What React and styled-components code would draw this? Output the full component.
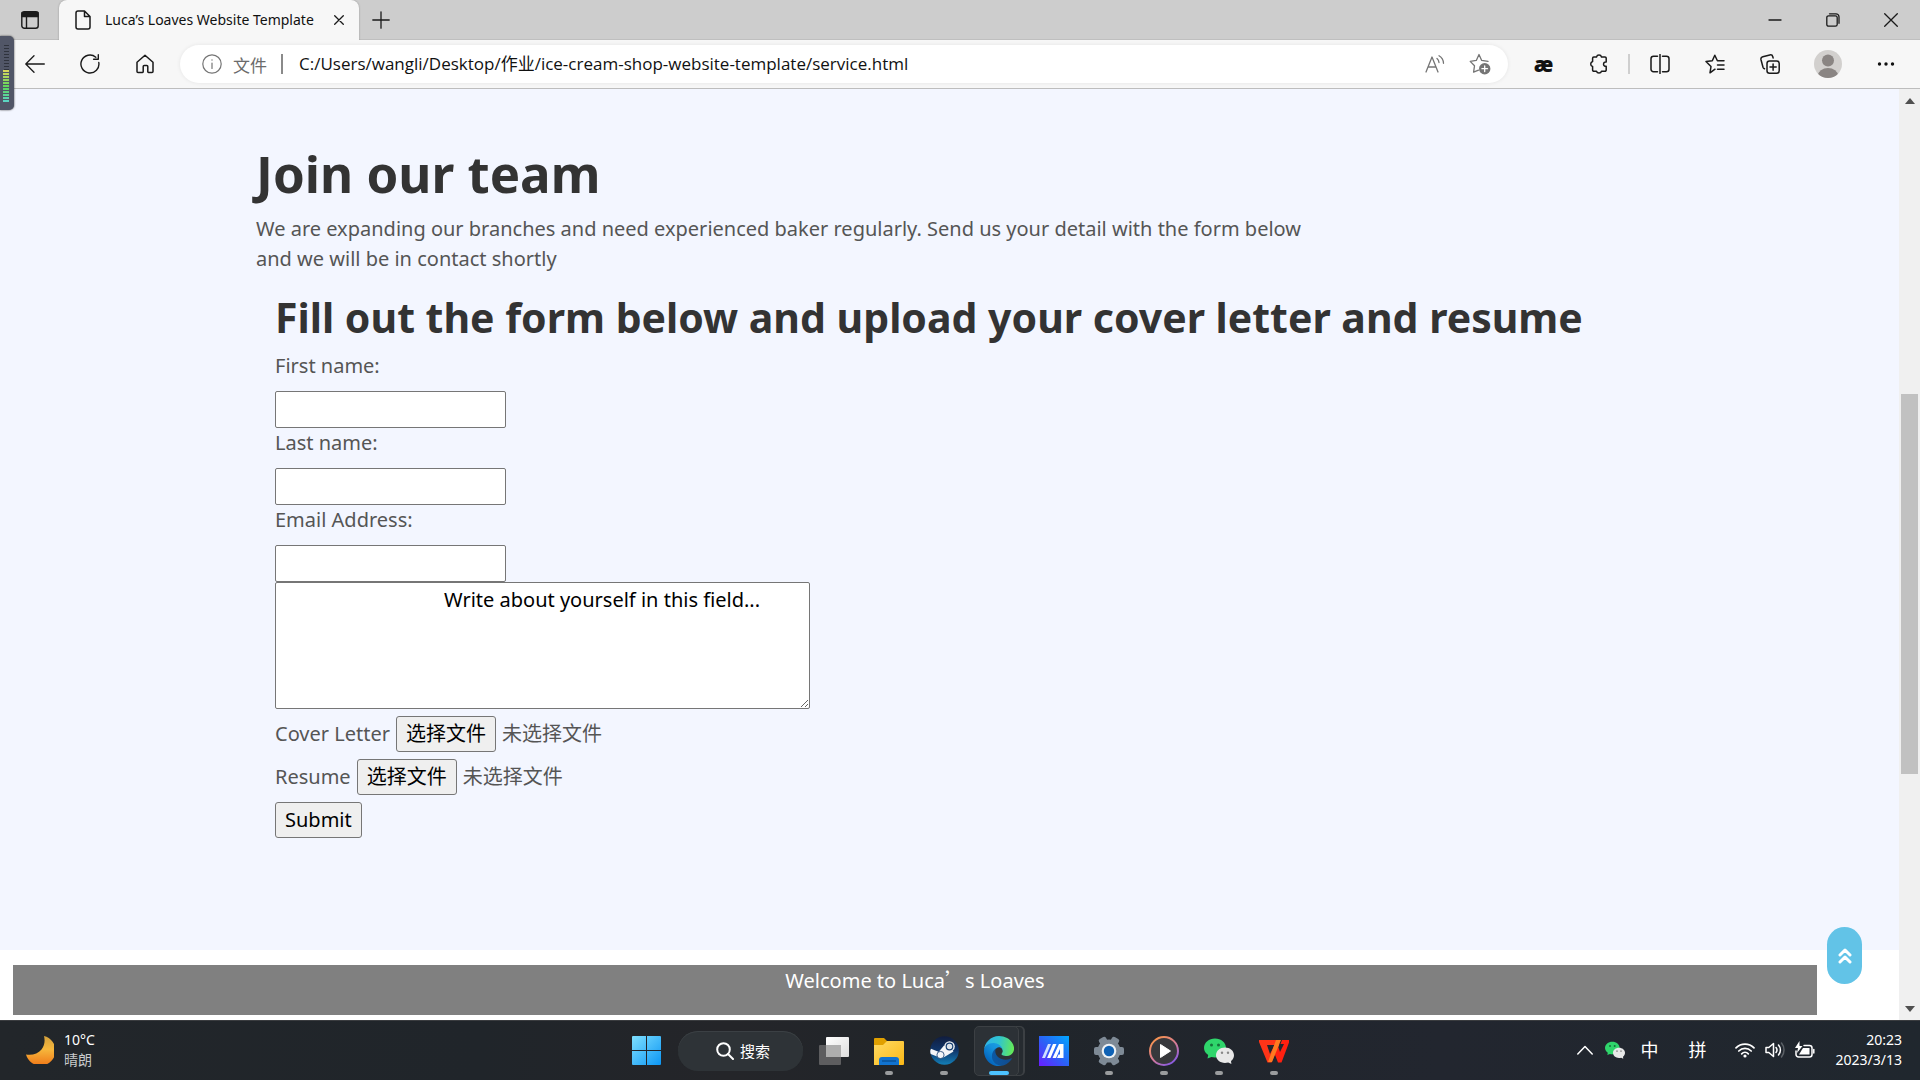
import React, { useRef, useState } from 'react';
import styled, { createGlobalStyle, css } from 'styled-components';

const GlobalStyle = createGlobalStyle`
  *, *::before, *::after { box-sizing: border-box; }
  html, body { margin: 0; height: 100%; overflow: hidden; }
  body { font-family: "Noto Sans", "Noto Sans CJK SC", sans-serif; }
  button, input, textarea { font-family: inherit; }
  h1, h2, p { margin: 0; }
  svg { display: block; flex: none; }
`;

const Desktop = styled.div`
  display: flex;
  flex-direction: column;
  height: 100vh;
  position: relative;
  background: #fff;
`;

/* ---------- browser chrome ---------- */

const TabStrip = styled.header`
  display: flex;
  align-items: stretch;
  height: 40px;
  flex: none;
  background: #cdcdcd;
  box-shadow: inset 0 -1px 0 #bfbfbf;
`;

const PlainButton = styled.button`
  display: flex;
  align-items: center;
  justify-content: center;
  padding: 0;
  border: 0;
  background: transparent;
  color: ${(p) => (p.$muted ? '#757575' : '#1a1a1a')};
  flex: none;
  width: ${(p) => p.$w || 55}px;
`;

const Tab = styled.div`
  display: flex;
  align-items: center;
  width: 300px;
  padding-left: 16px;
  border-radius: 8px 8px 0 0;
  background: #f7f7f7;
  color: #1a1a1a;
  box-shadow: 0 0 2px rgba(0, 0, 0, 0.3);
  clip-path: inset(-2px -2px 0 -2px);
`;

const TabTitle = styled.span`
  flex: 1;
  margin-left: 14px;
  font-size: 14px;
  line-height: 20px;
  white-space: nowrap;
  color: #111;
`;

const WindowButtons = styled.div`
  display: flex;
  margin-left: auto;
`;

const Toolbar = styled.nav`
  display: flex;
  align-items: center;
  height: 49px;
  flex: none;
  padding: 0 7px;
  background: #f7f7f7;
  border-bottom: 1px solid #bdbdbd;
`;

const AddressBar = styled.div`
  display: flex;
  align-items: center;
  flex: 1;
  min-width: 0;
  height: 38px;
  margin: 0 8px;
  padding: 0 6px 0 22px;
  border-radius: 19px;
  background: #fff;
  box-shadow: 0 0 4px rgba(0, 0, 0, 0.08);
  font-family: "Open Sans", "Noto Sans CJK SC", sans-serif;
  font-size: 17px;
`;

const Scheme = styled.span`
  margin-left: 11px;
  color: #6b6b6b;
  white-space: nowrap;
`;

const Rule = styled.span`
  flex: none;
  width: 2px;
  height: 20px;
  margin: ${(p) => p.$margin || '0'};
  background: ${(p) => p.$color || '#8a8a8a'};
`;

const UrlInput = styled.input`
  flex: 1;
  min-width: 0;
  padding: 0;
  border: 0;
  outline: 0;
  background: transparent;
  font-size: 17px;
  line-height: 24px;
  color: #111;
`;

const ExtensionMark = styled.span`
  font-family: "Open Sans", sans-serif;
  font-size: 21px;
  line-height: 24px;
  font-weight: 800;
  color: #111;
`;

const AudioMeter = styled.aside`
  position: absolute;
  left: 0;
  top: 36px;
  width: 14px;
  height: 74px;
  padding: 9px 0 0 3px;
  border-radius: 0 5px 5px 0;
  background: #515667;
  box-shadow: 0 0 2px #333;
`;

/* ---------- page ---------- */

const Viewport = styled.div`
  display: flex;
  flex: 1;
  min-height: 0;
`;

const Page = styled.main`
  display: flex;
  flex-direction: column;
  flex: 1;
  min-width: 0;
  position: relative;
  background: #fff;
`;

const JoinSection = styled.section`
  flex: 1;
  padding-top: 54px;
  background: #f3f6ff;
  color: #555;
  font-size: 20px;
  line-height: 30px;
`;

const Container = styled.div`
  max-width: 1387px;
  margin: 0 auto;
`;

const Title = styled.h1`
  font-size: 51px;
  line-height: 60px;
  font-weight: 700;
  color: #333;
`;

const Intro = styled.p`
  max-width: 1070px;
  margin-top: 11px;
`;

const Form = styled.form`
  display: flex;
  flex-direction: column;
  align-items: flex-start;
  margin-top: 18px;
  padding-left: 19px;
`;

const FormTitle = styled.h2`
  margin-bottom: 9px;
  font-size: 41px;
  line-height: 50px;
  font-weight: 700;
  color: #333;
  white-space: nowrap;
`;

const Field = styled.div`
  display: flex;
  flex-direction: column;
  gap: 10px;
`;

const fieldBox = css`
  border: 1px solid #767676;
  border-radius: 2px;
  background: #fff;
  color: #000;
  font-size: 20px;
  outline: 0;
`;

const TextInput = styled.input`
  ${fieldBox}
  width: 231px;
  height: 37px;
  padding: 1px 2px;
`;

const Message = styled.textarea`
  ${fieldBox}
  display: block;
  width: 535px;
  height: 127px;
  padding: 2px;
  line-height: 30px;
  text-indent: 166px;
  resize: both;
`;

const FileRow = styled.div`
  display: flex;
  align-items: center;
  gap: 6px;
  margin-top: 7px;
`;

const FormButton = styled.button`
  height: 36px;
  padding: 0 9px;
  border: 1px solid #767676;
  border-radius: 3px;
  background: #efefef;
  color: #000;
  font-size: 20px;
  line-height: 30px;
`;

const SubmitButton = styled(FormButton)`
  margin-top: 7px;
`;

const Footer = styled.footer`
  flex: none;
  padding: 15px 82px 5px 13px;
`;

const Welcome = styled.p`
  height: 50px;
  background: #808080;
  color: #fff;
  font-size: 20px;
  line-height: 30px;
  text-align: center;
`;

const WideQuote = styled.span`
  font-family: "Noto Sans CJK SC", sans-serif;
`;

const BackToTop = styled.a`
  position: absolute;
  right: 37px;
  bottom: 36px;
  display: flex;
  align-items: center;
  justify-content: center;
  width: 35px;
  height: 57px;
  border-radius: 18px;
  background: #62c3e7;
`;

const ScrollTrack = styled.div`
  display: flex;
  flex-direction: column;
  align-items: center;
  justify-content: space-between;
  flex: none;
  width: 21px;
  padding: 9px 0 8px;
  background: #f0f0f0;
`;

const ScrollThumb = styled.div`
  width: 17px;
  height: 380px;
  margin-top: 58px;
  background: #c1c1c1;
`;

/* ---------- taskbar ---------- */

const Taskbar = styled.footer`
  display: grid;
  grid-template-columns: 1fr auto 1fr;
  height: 60px;
  flex: none;
  border-top: 1px solid #3a3c3f;
  background: linear-gradient(90deg, #22262a, #20252a 25%, #242529 38%, #20252a 50%, #22262f 75%, #20272e);
  color: #fff;
  font-size: 14px;
  line-height: 20px;
`;

const Weather = styled.div`
  display: flex;
  align-items: center;
  gap: 10px;
  padding: 0 0 2px 26px;
`;

const Muted = styled.div`
  color: #c8cacb;
`;

const Dock = styled.div`
  display: flex;
  align-items: center;
`;

const DockButton = styled.button`
  display: flex;
  align-items: center;
  justify-content: center;
  position: relative;
  width: 55px;
  height: 50px;
  padding: 0;
  border: 0;
  background: transparent;

  &::before {
    content: '';
    display: ${(p) => (p.$active ? 'block' : 'none')};
    position: absolute;
    inset: 0 8px 0 2px;
    border: 1px solid #3c4044;
    border-radius: 5px;
    background: #2c3136;
    box-shadow: 5px 0 0 -1px #262b30, 6px 0 0 0 #3c4044;
  }

  &::after {
    content: '';
    display: ${(p) => (p.$running || p.$active ? 'block' : 'none')};
    position: absolute;
    bottom: 1px;
    width: ${(p) => (p.$active ? 20 : 8)}px;
    height: 4px;
    border-radius: 2px;
    background: ${(p) => (p.$active ? '#4cc2ff' : '#9a9c9e')};
  }

  svg { position: relative; }
`;

const SearchButton = styled.button`
  display: flex;
  align-items: center;
  justify-content: center;
  gap: 6px;
  width: 125px;
  height: 40px;
  margin: 0 4px;
  padding: 0 0 0 6px;
  border: 0;
  border-radius: 20px;
  background: #2e3337;
  box-shadow: inset 0 1px 0 #3b4044;
  color: #fff;
  font-size: 15px;
`;

const Tray = styled.div`
  display: flex;
  align-items: center;
  justify-content: flex-end;
  gap: 10px;
  padding: 0 18px 2px 0;
`;

const TrayGroup = styled.div`
  display: flex;
  align-items: center;
  gap: ${(p) => p.$gap}px;
  margin-right: ${(p) => p.$end || 0}px;
  font-size: 18px;
`;

const Clock = styled.div`
  margin-left: 11px;
  text-align: right;
`;

/* ---------- icons ---------- */

const Icon = ({ s = 20, w, h, sw = 1.3, children, vb }) => (
  <svg width={w || s} height={h || s} viewBox={vb || `0 0 ${w || s} ${h || s}`} fill="none" stroke="currentColor"
    strokeWidth={sw} strokeLinecap="round" strokeLinejoin="round" aria-hidden="true">{children}</svg>
);

const TabActionsIcon = () => (
  <Icon s={18} sw={1.4}><rect x="0.8" y="0.8" width="16.4" height="16.4" rx="2.5" />
    <path d="M1 1.5h16v4H1z" fill="currentColor" /><path d="M5.5 5v12" /></Icon>
);
const PageIcon = () => (
  <Icon w={16} h={20} sw={1.5}><path d="M1 3a2 2 0 0 1 2-2h6.5L15 6.500V17a2 2 0 0 1-2 2H3a2 2 0 0 1-2-2ZM9.500 1v5.500H15" /></Icon>
);
const CloseIcon = ({ s = 10 }) => <Icon s={s} sw={1.3}><path d={`M.7.7 ${s - 0.7} ${s - 0.7}M${s - 0.7}.7.7 ${s - 0.7}`} /></Icon>;
const PlusIcon = () => <Icon s={18}><path d="M9 .8v16.400M.8 9h16.400" /></Icon>;
const MinimizeIcon = () => <Icon s={14}><path d="M1 7h12" /></Icon>;
const RestoreIcon = () => (
  <Icon s={14}><rect x="0.800" y="2.800" width="10.400" height="10.400" rx="1.800" /><path d="M3.500.8h6.500a3 3 0 0 1 3 3v6.500" /></Icon>
);
const BackIcon = () => <Icon w={20} h={18}><path d="M19.300 9H1M9 .8.8 9 9 17.200" /></Icon>;
const ReloadIcon = () => (
  <Icon s={20} sw={1.4}><path d="M18.800 8.500A9 9 0 1 1 15.800 3.200M18.300.8V5.200H13.600" /></Icon>
);
const HomeIcon = () => (
  <Icon w={18} h={20} sw={1.500}><path d="M1 8.300 9 1.200l8 7.100V17.500a1 1 0 0 1-1 1h-3.500a.7.7 0 0 1-.7-.7V12.500a1 1 0 0 0-1-1H8.200a1 1 0 0 0-1 1V17.800a.7.7 0 0 1-.7.7H2a1 1 0 0 1-1-1Z" /></Icon>
);
const InfoIcon = () => (
  <Icon s={20} sw={1.200}><circle cx="10" cy="10" r="9.200" /><path d="M10 9v5.500" /><circle cx="10" cy="6" r=".7" fill="currentColor" stroke="none" /></Icon>
);
const ReadAloudIcon = () => (
  <Icon w={20} h={18}><path d="M1 17 7 2l6 15M3.200 12h7.600M12 3.500a6 6 0 0 1 2 4M14 .8a9 9 0 0 1 4.500 7.500" /></Icon>
);
const AddFavoriteIcon = () => (
  <Icon w={22} h={22}><path d="M9.500 17.200 4.600 19.200 5.500 12.800 1.200 8.400 7.300 7.400 10 1.500 12.700 7.400 19 8.400" />
    <circle cx="15.700" cy="15.700" r="5.700" fill="#757575" stroke="none" /><path d="M15.700 12.900v5.600M12.900 15.700h5.600" stroke="#fff" /></Icon>
);
const PuzzleIcon = () => (
  <Icon s={20} sw={1.500}><path d="M4.800 3h2.700a2.600 2.600 0 0 1 5 0H16a1.200 1.200 0 0 1 1.200 1.200V8a2.200 2.200 0 1 0 0 4.300V16a1.200 1.200 0 0 1-1.200 1.200h-3.500a2.600 2.600 0 0 1-5 0H4.800A1.200 1.200 0 0 1 3.600 16v-3.500a2.600 2.600 0 0 1 0-5V4.200A1.200 1.200 0 0 1 4.800 3" /></Icon>
);
const SplitIcon = () => (
  <Icon s={20} sw={1.500}><path d="M7.500 2.300H3.500A2.500 2.500 0 0 0 1 4.800v10.400a2.500 2.500 0 0 0 2.500 2.500h4M12.500 2.300h4A2.500 2.500 0 0 1 19 4.800v10.400a2.500 2.500 0 0 1-2.500 2.500h-4M10 .5v19" /></Icon>
);
const FavoritesIcon = () => (
  <Icon s={20} sw={1.500}><path d="M10 15.200 5 18.800 6 12.500 1 7.500 7.300 6.800 9.800 1.200 12.400 6.800H19M12.500 11H19M12.500 15.200H19" /></Icon>
);
const CollectionsIcon = () => (
  <Icon s={20} sw={1.500}><rect x="7" y="7" width="12.200" height="12.200" rx="2.500" /><path d="M13.100 10v6.200M10 13.100h6.200M4.500 14.800a2.500 2.500 0 0 1-1.500-1.600L1 5.700a2.500 2.500 0 0 1 1.800-3L9.800.9a2.500 2.500 0 0 1 3 1.800l.3 1.200" /></Icon>
);
const AvatarIcon = () => (
  <svg width="28" height="28" viewBox="0 0 28 28" aria-hidden="true"><clipPath id="face"><circle cx="14" cy="14" r="14" /></clipPath>
    <g clipPath="url(#face)"><path fill="#d2d0ce" d="M0 0h28v28H0z" /><circle cx="14" cy="10.500" r="6" fill="#8a8583" /><ellipse cx="14" cy="25.500" rx="10" ry="7.500" fill="#8a8583" /></g></svg>
);
const DotsIcon = () => (
  <svg width="18" height="4" fill="#111" aria-hidden="true"><circle cx="2.500" cy="2" r="1.700" /><circle cx="9" cy="2" r="1.700" /><circle cx="15.500" cy="2" r="1.700" /></svg>
);
const MeterBars = () => (
  <svg width="7" height="58" aria-hidden="true">
    {Array.from({ length: 9 }, (_, i) => <path key={i} fill="#2f333d" d={`M1 ${i * 3}h5v1H1z`} />)}
    {Array.from({ length: 11 }, (_, i) => <path key={i} fill={`hsl(${60 + i * 11} 60% 60%)`} d={`M0 ${25 + i * 3}h6v2H0z`} />)}
  </svg>
);
const ChevronsUpIcon = () => (
  <svg width="14" height="16" fill="none" stroke="#fff" strokeWidth="3" strokeLinecap="round" strokeLinejoin="round" aria-hidden="true">
    <path d="M2 7l5-5 5 5M2 14l5-5 5 5" /></svg>
);
const Arrow = ({ down }) => (
  <svg width="10" height="6" aria-hidden="true"><path fill="#505050" d={down ? 'M0 0h10L5 6z' : 'M0 6h10L5 0z'} /></svg>
);
const MoonIcon = () => (
  <svg width="28" height="28" aria-hidden="true"><defs><linearGradient id="moon" x2="0" y2="1"><stop stopColor="#d3a03c" /><stop offset=".45" stopColor="#f6b73c" /><stop offset="1" stopColor="#f07818" /></linearGradient></defs>
    <path fill="url(#moon)" d="M18 0A15 15 0 1 1 0 18.500C6 19.500 12 18 15.500 13.500S19 4 18 0Z" /></svg>
);
const StartIcon = () => (
  <svg width="29" height="29" aria-hidden="true"><defs><linearGradient id="win" x2="1" y2="1"><stop stopColor="#7fe0ff" /><stop offset="1" stopColor="#0c96f4" /></linearGradient></defs>
    <path fill="url(#win)" d="M1 0h13v14H0V1a1 1 0 0 1 1-1ZM15 0h13a1 1 0 0 1 1 1v13H15ZM0 15h14v14H1a1 1 0 0 1-1-1ZM15 15h14v13a1 1 0 0 1-1 1H15Z" /></svg>
);
const SearchIcon = () => <Icon s={18} sw={2}><circle cx="7.500" cy="7.500" r="6.300" /><path d="M12 12l5 5" /></Icon>;
const TaskViewIcon = () => (
  <svg width="30" height="28" aria-hidden="true"><defs><linearGradient id="tv" x2="1" y2="1"><stop stopColor="#fff" /><stop offset="1" stopColor="#ddd" /></linearGradient></defs>
    <rect y="8" width="22" height="20" rx="1" fill="#5d5d5f" /><rect x="7" width="23" height="20" rx="1" fill="url(#tv)" /><path fill="#aeaeae" d="M7 8h15v12H7z" /></svg>
);
const FolderIcon = () => (
  <svg width="30" height="28" aria-hidden="true"><defs><linearGradient id="fold" x2="1" y2="1"><stop stopColor="#ffdb64" /><stop offset="1" stopColor="#fbb816" /></linearGradient></defs>
    <path fill="#e0a000" d="M0 2a1 1 0 0 1 1-1h9l3 3v6H0z" /><path fill="url(#fold)" d="M0 8h9l4-4h16a1 1 0 0 1 1 1v22a1 1 0 0 1-1 1H0z" />
    <path fill="#1173d0" d="M5 28v-5a3 3 0 0 1 3-3h14a3 3 0 0 1 3 3v5z" /><path stroke="#0a4a8a" strokeWidth="1.200" d="M8 24h14" /></svg>
);
const SteamIcon = () => (
  <svg width="29" height="29" aria-hidden="true"><defs><linearGradient id="steam" x2="0" y2="1"><stop stopColor="#111d3e" /><stop offset=".5" stopColor="#10366b" /><stop offset="1" stopColor="#1380b8" /></linearGradient><clipPath id="sc"><circle cx="14.500" cy="14.500" r="14.300" /></clipPath></defs>
    <circle cx="14.500" cy="14.500" r="14.300" fill="url(#steam)" /><g clipPath="url(#sc)"><path stroke="#f4f6f8" strokeWidth="5" d="M0 15l10 4" /><path fill="#f4f6f8" d="M9 15.500l5-6 9.500 6-10 6z" /><circle cx="19.500" cy="10.500" r="5.300" fill="#f4f6f8" /><circle cx="19.500" cy="10.500" r="3.300" fill="#dce3ea" stroke="#163d70" strokeWidth="1.200" /><circle cx="10.500" cy="19" r="3.600" fill="#f4f6f8" stroke="#163d70" strokeWidth=".8" /></g></svg>
);
const EdgeIcon = () => (
  <svg width="30" height="30" viewBox="0 0 256 256" aria-hidden="true">
    <defs>
      <linearGradient id="e1" x1="63" y1="177" x2="241" y2="177" gradientUnits="userSpaceOnUse"><stop stopColor="#0c59a4" /><stop offset="1" stopColor="#114a8b" /></linearGradient>
      <linearGradient id="e2" x1="157" y1="92" x2="46" y2="213" gradientUnits="userSpaceOnUse"><stop stopColor="#1b9de2" /><stop offset=".4" stopColor="#1491dc" /><stop offset="1" stopColor="#0669bf" /></linearGradient>
      <linearGradient id="e3" x1="10" y1="70" x2="256" y2="110" gradientUnits="userSpaceOnUse"><stop stopColor="#2fb5e8" /><stop offset=".45" stopColor="#30c4d0" /><stop offset="1" stopColor="#66eb52" /></linearGradient>
    </defs>
    <path fill="url(#e1)" d="M231 190.500c-3.400 1.800-6.900 3.400-10.500 4.700-11.500 4.300-23.600 6.500-35.900 6.500-47.300 0-88.500-32.500-88.500-74.300.1-11.400 6.400-21.900 16.400-27.300-42.800 1.800-53.800 46.400-53.800 72.500 0 73.900 68.100 81.400 82.800 81.400 7.900 0 19.800-2.300 27-4.600l1.300-.4c27.600-9.500 51-28.100 66.600-52.800 3-4.800-.8-8-5.400-5.700z" />
    <path fill="url(#e2)" d="M105.700 241.400c-8.900-5.500-16.600-12.800-22.700-21.300-26.300-36-18.400-86.500 17.600-112.800 3.800-2.700 7.700-5.200 11.900-7.200 3.100-1.500 8.400-4.100 15.500-4 10.100.1 19.600 4.900 25.700 13 4 5.400 6.300 11.900 6.400 18.700 0-.2 24.500-79.600-80-79.600-43.900 0-80 41.700-80 78.200-.2 19.300 4 38.500 12.100 56 27.600 58.800 94.800 87.600 156.400 67.100-21.100 6.600-44.100 3.700-62.900-8.100z" />
    <path fill="url(#e3)" d="M152.300 148.900c-.8 1-3.300 2.500-3.300 5.700 0 2.600 1.700 5.200 4.800 7.300 14.400 10.100 41.700 8.700 41.700 8.700 10.700 0 21.300-2.900 30.500-8.300 18.900-11 30.500-31.200 30.500-53 .3-22.400-8-37.300-11.300-43.900C223.900 23.900 177.700 0 127.400 0 57.300 0 .9 57.500 0 126.200c.5-36.500 36.800-66 80-66 3.500 0 23.500.3 42 10.100 16.300 8.500 24.900 18.900 30.800 29.200 6.200 10.700 7.300 24.100 7.300 29.500 0 5.300-2.700 13.300-7.800 19.900z" />
  </svg>
);
const MyAsusIcon = () => (
  <svg width="30" height="30" aria-hidden="true"><defs><linearGradient id="asus" x1="0" y1="1" x2="1" y2="0"><stop stopColor="#6a1cff" /><stop offset=".5" stopColor="#2a63f6" /><stop offset="1" stopColor="#00a8ff" /></linearGradient></defs>
    <path fill="url(#asus)" d="M0 0h30v30H0z" />
    <path fill="#cfe0ff" d="M3 22 9 8h3L6 22Z" /><path fill="#fff" d="M8 22 14 8h3.500L11.500 22Z" />
    <path fill="#fff" d="M13.500 22 20 8h4.500v14H21V13l-4 9Z" /><path fill="#fff" d="M18 22l1.500-3.500H24V22Z" /></svg>
);
const GearIcon = () => (
  <svg width="30" height="30" viewBox="-15 -15 30 30" aria-hidden="true">
    <g fill="#7e8a96">{[30, 90, 150].map((a) => <rect key={a} x="-4" y="-15" width="8" height="30" rx="2" transform={`rotate(${a})`} />)}<circle r="11.500" /></g>
    <circle r="7.300" fill="#eef2f5" /><circle r="5.200" fill="#0f62b5" /></svg>
);
const MediaIcon = () => (
  <svg width="30" height="30" aria-hidden="true"><defs><linearGradient id="media" x2=".7" y2="1"><stop stopColor="#ff9a3c" /><stop offset=".6" stopColor="#d47a9a" /><stop offset="1" stopColor="#8a5be0" /></linearGradient></defs>
    <circle cx="15" cy="15" r="14" fill="#37383c" stroke="url(#media)" strokeWidth="2" /><path fill="#fff" stroke="#fff" strokeLinejoin="round" d="M11.500 8.500v13L21.500 15Z" /></svg>
);
const WeChatIcon = ({ s = 30 }) => (
  <svg width={s} height={s} viewBox="0 0 30 30" aria-hidden="true">
    <path fill="#2fd56b" d="M11 2.500c6 0 11 4 11 9.500s-5 9.500-11 9.500c-1.300 0-2.500-.2-3.600-.5L3.500 22.500l.7-3.500C1.600 17.300 0 14.800 0 12 0 6.500 5 2.500 11 2.500Z" />
    <circle cx="7.500" cy="9" r="1.500" fill="#16703a" /><circle cx="14.500" cy="9" r="1.500" fill="#16703a" />
    <path fill="#e8e8e8" d="M21 11.500c5 0 9 3.400 9 7.700 0 2.400-1.200 4.500-3 5.900l.4 2.900-3.200-1.500c-1 .3-2.100.4-3.200.4-5 0-9-3.400-9-7.700s4-7.700 9-7.700Z" />
    <circle cx="18" cy="16.700" r="1.200" fill="#888" /><circle cx="24" cy="16.700" r="1.200" fill="#888" /></svg>
);
const WpsIcon = () => (
  <svg width="30" height="24" aria-hidden="true"><path fill="#ff3418" d="M0 1h19l-2.500 5H8l3 9 4.500-9H20L12.500 23.500H8.500L0 3Z" /><path fill="#ff2010" d="M23 1h7v2.500L22.500 23.500H19L14.500 12l2-5H19l2 6L25 5H21.500Z" /><path fill="#ff7a20" d="M17 1h5L13 23h-4Z" /></svg>
);
const ChevronIcon = () => <Icon w={16} h={10} sw={1.500}><path d="M.8 9 8 1.500 15.200 9" /></Icon>;
const WifiIcon = () => (
  <Icon w={20} h={16} sw={1.700}><path d="M1 5.800a12.700 12.700 0 0 1 18 0M3.800 9a8.800 8.800 0 0 1 12.400 0M6.700 11.800a4.700 4.700 0 0 1 6.600 0" /><circle cx="10" cy="14" r="1.600" fill="currentColor" stroke="none" /></Icon>
);
const SoundIcon = () => (
  <Icon w={20} h={16} sw={1.500}><path d="M1 5.500v5h2.800L8.500 14.500v-13L3.800 5.500ZM11 5.500a4 4 0 0 1 0 5M13.500 3a7.500 7.500 0 0 1 0 10" /><path d="M16.500 1a11 11 0 0 1 0 14" stroke="#5b6066" /></Icon>
);
const BatteryIcon = () => (
  <Icon w={20} h={18} sw={1.500}><path d="M9 4.500h5.500A2.500 2.500 0 0 1 17 7v6.500a2.500 2.500 0 0 1-2.500 2.500h-11A2.500 2.500 0 0 1 1 13.500V10M18.800 8.500v3.500" /><path d="M8 7h6.500v6.500H4Z" fill="currentColor" stroke="none" /><path d="M4.500 0 0 7h3L2 12 7.500 5h-3Z" fill="currentColor" stroke="none" /></Icon>
);

/* ---------- composition ---------- */

function FilePicker({ id, label }) {
  const input = useRef(null);
  const [name, setName] = useState('');
  return (
    <FileRow>
      <label htmlFor={id}>{label}</label>
      <FormButton type="button" id={id} onClick={() => input.current.click()}>选择文件</FormButton>
      <input ref={input} type="file" hidden aria-label={label} onChange={(e) => setName(e.target.files[0]?.name || '')} />
      <span>{name || '未选择文件'}</span>
    </FileRow>
  );
}

const FIELDS = [
  ['first', 'First name:', 'text'],
  ['last', 'Last name:', 'text'],
  ['email', 'Email Address:', 'email'],
];

const APPS = [
  ['Task view', TaskViewIcon, false],
  ['File Explorer', FolderIcon, true],
  ['Steam', SteamIcon, true],
  ['Edge', EdgeIcon, true, true],
  ['MyASUS', MyAsusIcon, false],
  ['Settings', GearIcon, true],
  ['Media Player', MediaIcon, true],
  ['WeChat', WeChatIcon, true],
  ['WPS', WpsIcon, true],
];

export default function App() {
  const [url, setUrl] = useState('C:/Users/wangli/Desktop/作业/ice-cream-shop-website-template/service.html');
  return (
    <Desktop lang="zh-CN">
      <GlobalStyle />
      <TabStrip>
        <PlainButton $w={59} aria-label="Tab actions"><TabActionsIcon /></PlainButton>
        <Tab>
          <PageIcon />
          <TabTitle>Luca’s Loaves Website Template</TabTitle>
          <PlainButton $w={40} aria-label="Close tab"><CloseIcon /></PlainButton>
        </Tab>
        <PlainButton $w={43} aria-label="New tab"><PlusIcon /></PlainButton>
        <WindowButtons>
          <PlainButton $w={58} aria-label="Minimize"><MinimizeIcon /></PlainButton>
          <PlainButton $w={58} aria-label="Restore"><RestoreIcon /></PlainButton>
          <PlainButton $w={58} aria-label="Close"><CloseIcon s={14} /></PlainButton>
        </WindowButtons>
      </TabStrip>

      <Toolbar>
        <PlainButton aria-label="Back"><BackIcon /></PlainButton>
        <PlainButton aria-label="Reload"><ReloadIcon /></PlainButton>
        <PlainButton aria-label="Home"><HomeIcon /></PlainButton>
        <AddressBar>
          <PlainButton $w={20} $muted aria-label="Page information"><InfoIcon /></PlainButton>
          <Scheme>文件</Scheme>
          <Rule $margin="0 16px 0 14px" />
          <UrlInput aria-label="Address" value={url} onChange={(e) => setUrl(e.target.value)} />
          <PlainButton $w={45} $muted aria-label="Read aloud"><ReadAloudIcon /></PlainButton>
          <PlainButton $w={45} $muted aria-label="Add to favorites"><AddFavoriteIcon /></PlainButton>
        </AddressBar>
        <PlainButton aria-label="Extension"><ExtensionMark>æ</ExtensionMark></PlainButton>
        <PlainButton aria-label="Extensions"><PuzzleIcon /></PlainButton>
        <Rule $color="#cfcfcf" $margin="0 2px" />
        <PlainButton aria-label="Split screen"><SplitIcon /></PlainButton>
        <PlainButton aria-label="Favorites"><FavoritesIcon /></PlainButton>
        <PlainButton aria-label="Collections"><CollectionsIcon /></PlainButton>
        <PlainButton $w={61} aria-label="Profile"><AvatarIcon /></PlainButton>
        <PlainButton aria-label="More"><DotsIcon /></PlainButton>
      </Toolbar>

      <Viewport>
        <Page>
          <JoinSection>
            <Container>
              <Title>Join our team</Title>
              <Intro>
                We are expanding our branches and need experienced baker regularly. Send us your detail with the form
                below and we will be in contact shortly
              </Intro>
              <Form onSubmit={(e) => e.preventDefault()}>
                <FormTitle>Fill out the form below and upload your cover letter and resume</FormTitle>
                {FIELDS.map(([id, label, type]) => (
                  <Field key={id}>
                    <label htmlFor={id}>{label}</label>
                    <TextInput id={id} type={type} />
                  </Field>
                ))}
                <Message aria-label="About yourself" defaultValue="Write about yourself in this field..." />
                <FilePicker id="cover" label="Cover Letter" />
                <FilePicker id="resume" label="Resume" />
                <SubmitButton type="submit">Submit</SubmitButton>
              </Form>
            </Container>
          </JoinSection>
          <Footer>
            <Welcome>Welcome to Luca<WideQuote>’</WideQuote>s Loaves</Welcome>
          </Footer>
          <BackToTop href="#top" aria-label="Back to top"><ChevronsUpIcon /></BackToTop>
        </Page>
        <ScrollTrack>
          <Arrow />
          <ScrollThumb />
          <Arrow down />
        </ScrollTrack>
      </Viewport>

      <Taskbar>
        <Weather>
          <MoonIcon />
          <div>
            <div>10°C</div>
            <Muted>晴朗</Muted>
          </div>
        </Weather>
        <Dock>
          <DockButton aria-label="Start"><StartIcon /></DockButton>
          <SearchButton><SearchIcon />搜索</SearchButton>
          {APPS.map(([name, Glyph, running, active]) => (
            <DockButton key={name} aria-label={name} $running={running} $active={active}><Glyph /></DockButton>
          ))}
        </Dock>
        <Tray>
          <TrayGroup $gap={12} $end={6}><ChevronIcon /><WeChatIcon s={20} /></TrayGroup>
          <TrayGroup $gap={30} $end={18}><span>中</span><span>拼</span></TrayGroup>
          <WifiIcon />
          <SoundIcon />
          <BatteryIcon />
          <Clock>
            <div>20:23</div>
            <div>2023/3/13</div>
          </Clock>
        </Tray>
      </Taskbar>

      <AudioMeter aria-hidden="true"><MeterBars /></AudioMeter>
    </Desktop>
  );
}
